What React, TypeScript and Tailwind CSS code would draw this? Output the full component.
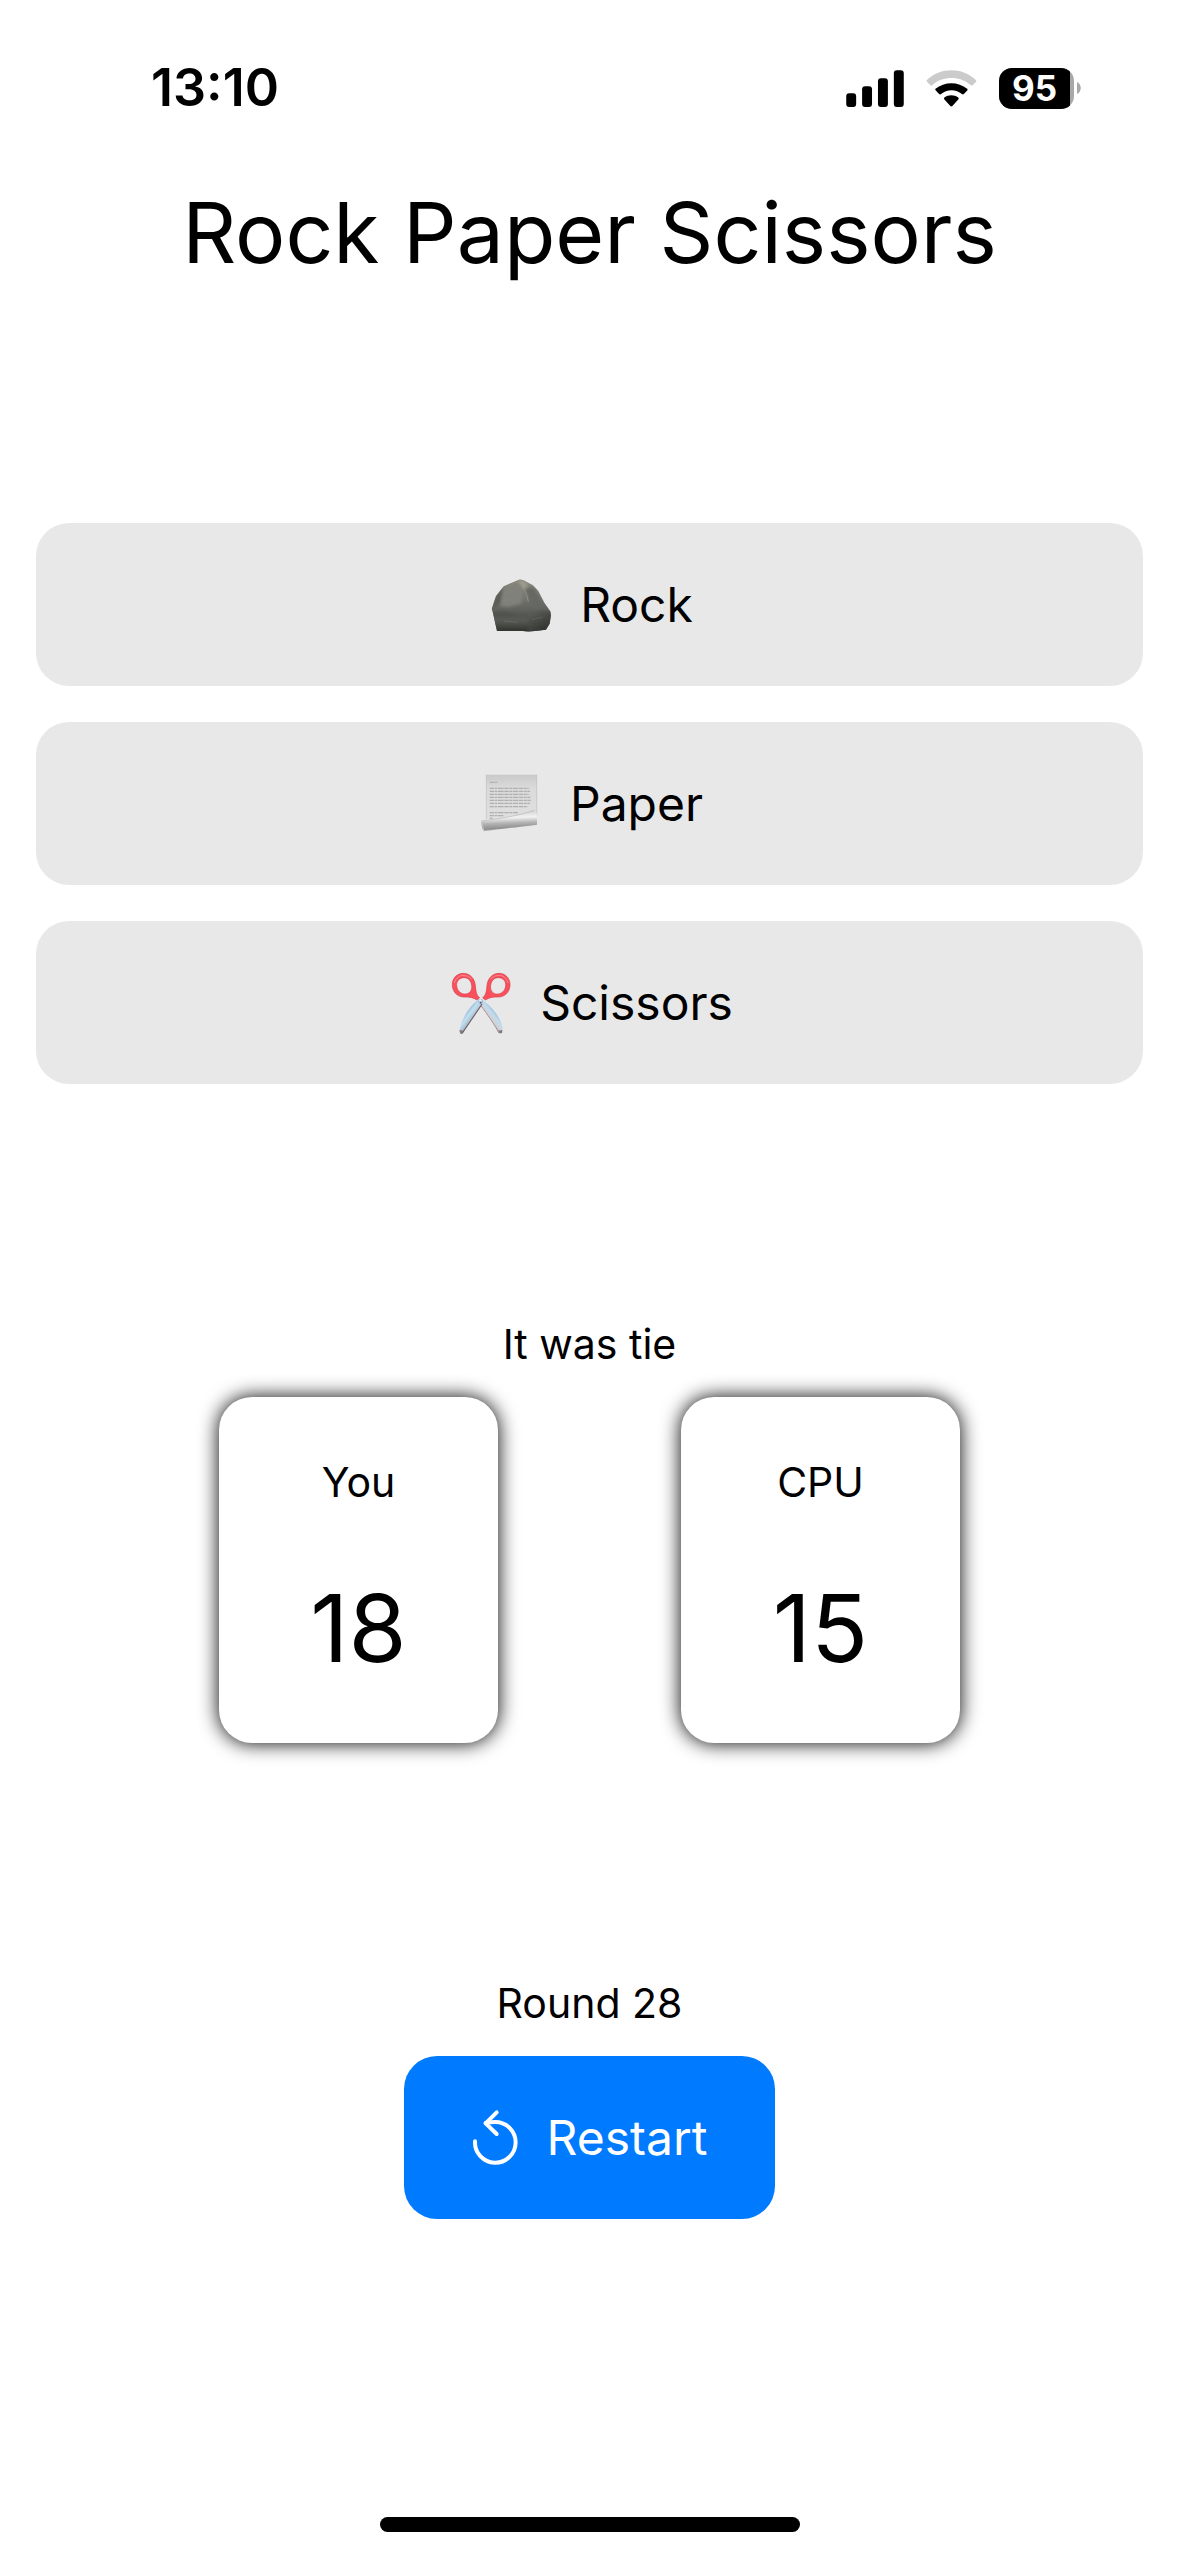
import type { ReactNode } from "react";

function SignalIcon() {
  return (
    <svg viewBox="48 50 174 124" className="h-[41px] w-[58px]" aria-hidden="true">
      <rect x="48" y="126" width="30" height="42" rx="9" />
      <rect x="96" y="105" width="30" height="63" rx="9" />
      <rect x="144" y="81" width="30" height="87" rx="9" />
      <rect x="192" y="57" width="30" height="111" rx="9" />
    </svg>
  );
}

function WifiIcon() {
  return (
    <svg viewBox="288 50 153 124" className="h-[41px] w-[51px]" aria-hidden="true">
      <path
        d="M290 86Q288 89 291 92L301 102Q303 104 306 102C338 73 390 73 423 102Q426 104 428 102L438 92Q441 89 438 86C397 47 331 47 290 86Z"
        fill="#cbcbcb"
      />
      <path d="M316 113Q314 116 317 118L327 129Q330 131 333 129C350 113 379 113 396 129Q399 131 402 129L412 118Q415 116 412 113C385 90 343 90 316 113Z" />
      <path d="M343 139Q340 142 343 145L361 165Q364 168 367 165L385 145Q388 142 385 139C373 130 355 130 343 139Z" />
    </svg>
  );
}

function Battery() {
  return (
    <div className="flex items-center" role="img" aria-label="Battery 95 percent">
      <div className="h-[41px] w-[75px] overflow-hidden rounded-[13px] bg-[#a8a8a8]">
        <div className="flex h-full w-[71px] items-center justify-center bg-black text-[35px] font-bold text-white">
          95
        </div>
      </div>
      <svg viewBox="0 0 4 12" className="ml-[3px] h-3 w-1" aria-hidden="true">
        <path d="M0 0C5 2 5 10 0 12Z" fill="#a8a8a8" />
      </svg>
    </div>
  );
}

function RockIcon() {
  return (
    <svg viewBox="45 35 198 198" className="size-[66px]" aria-hidden="true">
      <defs>
        <linearGradient id="rock-body" x1="0" y1="0" x2="0" y2="1">
          <stop offset="0" stopColor="#8b8b80" />
          <stop offset="0.35" stopColor="#74756f" />
          <stop offset="0.6" stopColor="#5e605b" />
          <stop offset="0.8" stopColor="#4a4c47" />
          <stop offset="1" stopColor="#2f302c" />
        </linearGradient>
        <linearGradient id="rock-front" x1="0" y1="0" x2="0" y2="1">
          <stop offset="0" stopColor="#4c4e49" />
          <stop offset="0.4" stopColor="#5a5c56" />
          <stop offset="1" stopColor="#2b2c28" />
        </linearGradient>
        <linearGradient id="rock-side" x1="0" y1="0" x2="0.6" y2="1">
          <stop offset="0" stopColor="#62645e" />
          <stop offset="1" stopColor="#30312d" />
        </linearGradient>
        <clipPath id="rock-shape">
          <path d="M62 146L75 107 98 78 122 67 147 57 158 60 186 75 202 92 220 127 238 153 240 165 236 190 225 208 172 214 155 212 78 212 73 190 66 158Z" />
        </clipPath>
        <filter id="rock-soft" x="-10%" y="-10%" width="120%" height="120%">
          <feGaussianBlur stdDeviation="5" />
        </filter>
      </defs>
      <g clipPath="url(#rock-shape)">
        <path d="M60 55H242V216H60Z" fill="url(#rock-body)" />
        <g filter="url(#rock-soft)">
          <path d="M62 156L105 156 148 164 172 162 168 216 78 216 70 190Z" fill="url(#rock-front)" />
          <path d="M172 162L205 150 242 154 240 188 222 214 170 216Z" fill="url(#rock-side)" />
          <path d="M160 78L190 84 218 136 198 148 180 128Z" fill="#666862" />
          <path d="M100 84L142 70 158 98 150 130 112 140 84 136Z" fill="#80817a" />
          <path d="M72 112L96 78 88 132 64 146Z" fill="#5a5c56" />
          <path d="M138 58L162 62 172 82 156 84Z" fill="#9d9c8c" />
        </g>
        <path d="M154 76L166 100 172 124" fill="none" stroke="#a5a498" strokeWidth="3" opacity="0.6" />
        <path
          d="M96 100L126 92M92 122L136 116M100 182L140 186M184 178L216 170"
          fill="none"
          stroke="#8d8e86"
          strokeWidth="3"
          opacity="0.3"
        />
      </g>
    </svg>
  );
}

function PaperIcon() {
  return (
    <svg viewBox="48 46 198 198" className="size-[66px]" aria-hidden="true">
      <defs>
        <linearGradient id="sheet" x1="0" y1="0" x2="0" y2="1">
          <stop offset="0" stopColor="#c9c9c9" />
          <stop offset="0.3" stopColor="#dadada" />
          <stop offset="1" stopColor="#dfdfdf" />
        </linearGradient>
        <linearGradient id="roll" x1="0.45" y1="0" x2="0.55" y2="1">
          <stop offset="0.1" stopColor="#d8d8d8" />
          <stop offset="0.35" stopColor="#f2f2f2" />
          <stop offset="0.6" stopColor="#b4b4b4" />
          <stop offset="0.85" stopColor="#8f8f8f" />
          <stop offset="1" stopColor="#d0d0d0" />
        </linearGradient>
      </defs>
      <path d="M78 57H231V190H78Z" fill="url(#sheet)" />
      <path d="M79 57V190M230 57V180" stroke="#c2c2c2" strokeWidth="2" />
      <g fill="none" stroke="#b0b0b0" strokeWidth="3.5" strokeDasharray="13 2 8 2 17 2">
        <path d="M89 80H114M89 98H206M89 107H210M89 116H206M89 125H211M89 134H212M89 143H210M89 153H203M89 171H174M89 180H130M89 188H98" />
      </g>
      <path d="M63 196C110 191 173 181 223 164C229 166 231 173 231 185L231 207C180 215 121 218 71 227C67 218 64 208 63 196Z" fill="url(#roll)" />
      <path d="M64 196C110 191 173 181 223 164" fill="none" stroke="#a9a9a9" strokeWidth="1.5" />
      <path d="M64 199Q71 211 71 226" fill="none" stroke="#c9c9c9" strokeWidth="2" />
    </svg>
  );
}

function ScissorHandle() {
  return (
    <>
      <path
        fillRule="evenodd"
        d="M100 68C80 68 66 84 67 104C68 126 84 140 104 139C118 138 130 141 141 148L149 141C137 132 138 118 136 104C134 84 120 68 100 68ZM102 81C88 81 78 92 80 106C82 122 94 131 107 130C120 129 127 118 125 104C123 90 115 81 102 81Z"
        fill="#f9505c"
        stroke="#d6434f"
        strokeWidth="2"
      />
      <path d="M73 96Q79 76 99 74Q115 74 124 84" fill="none" stroke="#ff8a90" strokeWidth="3" strokeLinecap="round" />
    </>
  );
}

function ScissorsIcon() {
  return (
    <svg viewBox="48 58 198 198" className="size-[66px]" aria-hidden="true">
      <defs>
        <linearGradient id="blade-left" x1="0.3" y1="0.3" x2="0.6" y2="0.65">
          <stop offset="0" stopColor="#8fb4d6" />
          <stop offset="0.4" stopColor="#c3dff2" />
          <stop offset="0.75" stopColor="#a9bfd0" />
          <stop offset="1" stopColor="#76676c" />
        </linearGradient>
        <linearGradient id="blade-right" x1="0.7" y1="0.3" x2="0.4" y2="0.65">
          <stop offset="0" stopColor="#8db5da" />
          <stop offset="0.4" stopColor="#c2dcee" />
          <stop offset="0.75" stopColor="#d3d0d3" />
          <stop offset="1" stopColor="#9d8e92" />
        </linearGradient>
      </defs>
      <path d="M157 148C178 160 205 192 214 218Q220 234 217 245Q213 251 207 247C195 224 172 187 150 160Z" fill="url(#blade-right)" />
      <path d="M152 164C172 190 195 224 207 247" fill="none" stroke="#a08f93" strokeWidth="3" />
      <path d="M147 146C124 160 98 198 90 231Q87 243 93 249L98 247C112 224 138 188 158 156Z" fill="url(#blade-left)" />
      <path d="M156 160C138 188 112 224 98 246L92 248" fill="none" stroke="#6c5d62" strokeWidth="3.5" />
      <path d="M88 238L91 248 98 247 101 240ZM205 240L209 248 216 247 217 238Z" fill="#85757a" />
      <ScissorHandle />
      <g transform="matrix(-1 0 0 1 307 0)">
        <ScissorHandle />
      </g>
      <circle cx="152" cy="152" r="8" fill="#a9c5dc" />
      <circle cx="151" cy="149" r="3.5" fill="#e9f2f8" />
      <circle cx="152" cy="156" r="2.5" fill="#4e5760" />
    </svg>
  );
}

function RestartIcon() {
  return (
    <svg
      viewBox="245 445 141 171"
      className="h-[57px] w-[47px]"
      fill="none"
      stroke="currentColor"
      strokeWidth="12"
      strokeLinecap="round"
      strokeLinejoin="round"
      aria-hidden="true"
    >
      <path d="M254 542A61 61 0 1 0 315 484Q301 484 286 487" />
      <path d="M319 455L286 488L319 520" />
    </svg>
  );
}

function ChoiceButton({ icon, label }: { icon: ReactNode; label: string }) {
  return (
    <button
      type="button"
      className="flex h-[163px] w-full items-center justify-center gap-7 rounded-[33px] bg-[#e8e8e8] text-[48px]"
    >
      {icon}
      {label}
    </button>
  );
}

function ScoreCard({ name, score }: { name: string; score: number }) {
  return (
    <div className="flex w-[279px] flex-col items-center gap-[62px] rounded-[33px] bg-white py-[58px] shadow-[0_0_20px_#000]">
      <h2 className="text-[41px] leading-[54px]">{name}</h2>
      <p className="text-[94px] leading-[114px]">{score}</p>
    </div>
  );
}

export default function App() {
  return (
    <div className="flex min-h-screen flex-col bg-white font-['Inter',sans-serif] text-black">
      <header className="flex h-44 items-center justify-between pr-[98px] pl-[151px]">
        <time className="text-[52px] font-semibold">13:10</time>
        <div className="flex items-center gap-[22px]">
          <SignalIcon />
          <WifiIcon />
          <Battery />
        </div>
      </header>
      <main className="flex flex-col items-center px-9">
        <h1 className="text-[84px] leading-[114px]">Rock Paper Scissors</h1>
        <div className="mt-[233px] flex w-full flex-col gap-9">
          <ChoiceButton icon={<RockIcon />} label="Rock" />
          <ChoiceButton icon={<PaperIcon />} label="Paper" />
          <ChoiceButton icon={<ScissorsIcon />} label="Scissors" />
        </div>
        <p className="mt-[233px] text-[41px] leading-[54px]">It was tie</p>
        <div className="mt-[26px] flex gap-[183px]">
          <ScoreCard name="You" score={18} />
          <ScoreCard name="CPU" score={15} />
        </div>
        <p className="mt-[233px] text-[41px] leading-[54px]">Round 28</p>
        <button
          type="button"
          className="mt-[26px] flex h-[163px] items-center justify-center gap-7 rounded-[33px] bg-[#007aff] px-[68px] text-[48px] text-white"
        >
          <RestartIcon />
          Restart
        </button>
      </main>
      <div className="mx-auto mt-auto mb-6 h-[15px] w-[420px] rounded-full bg-black" />
    </div>
  );
}
